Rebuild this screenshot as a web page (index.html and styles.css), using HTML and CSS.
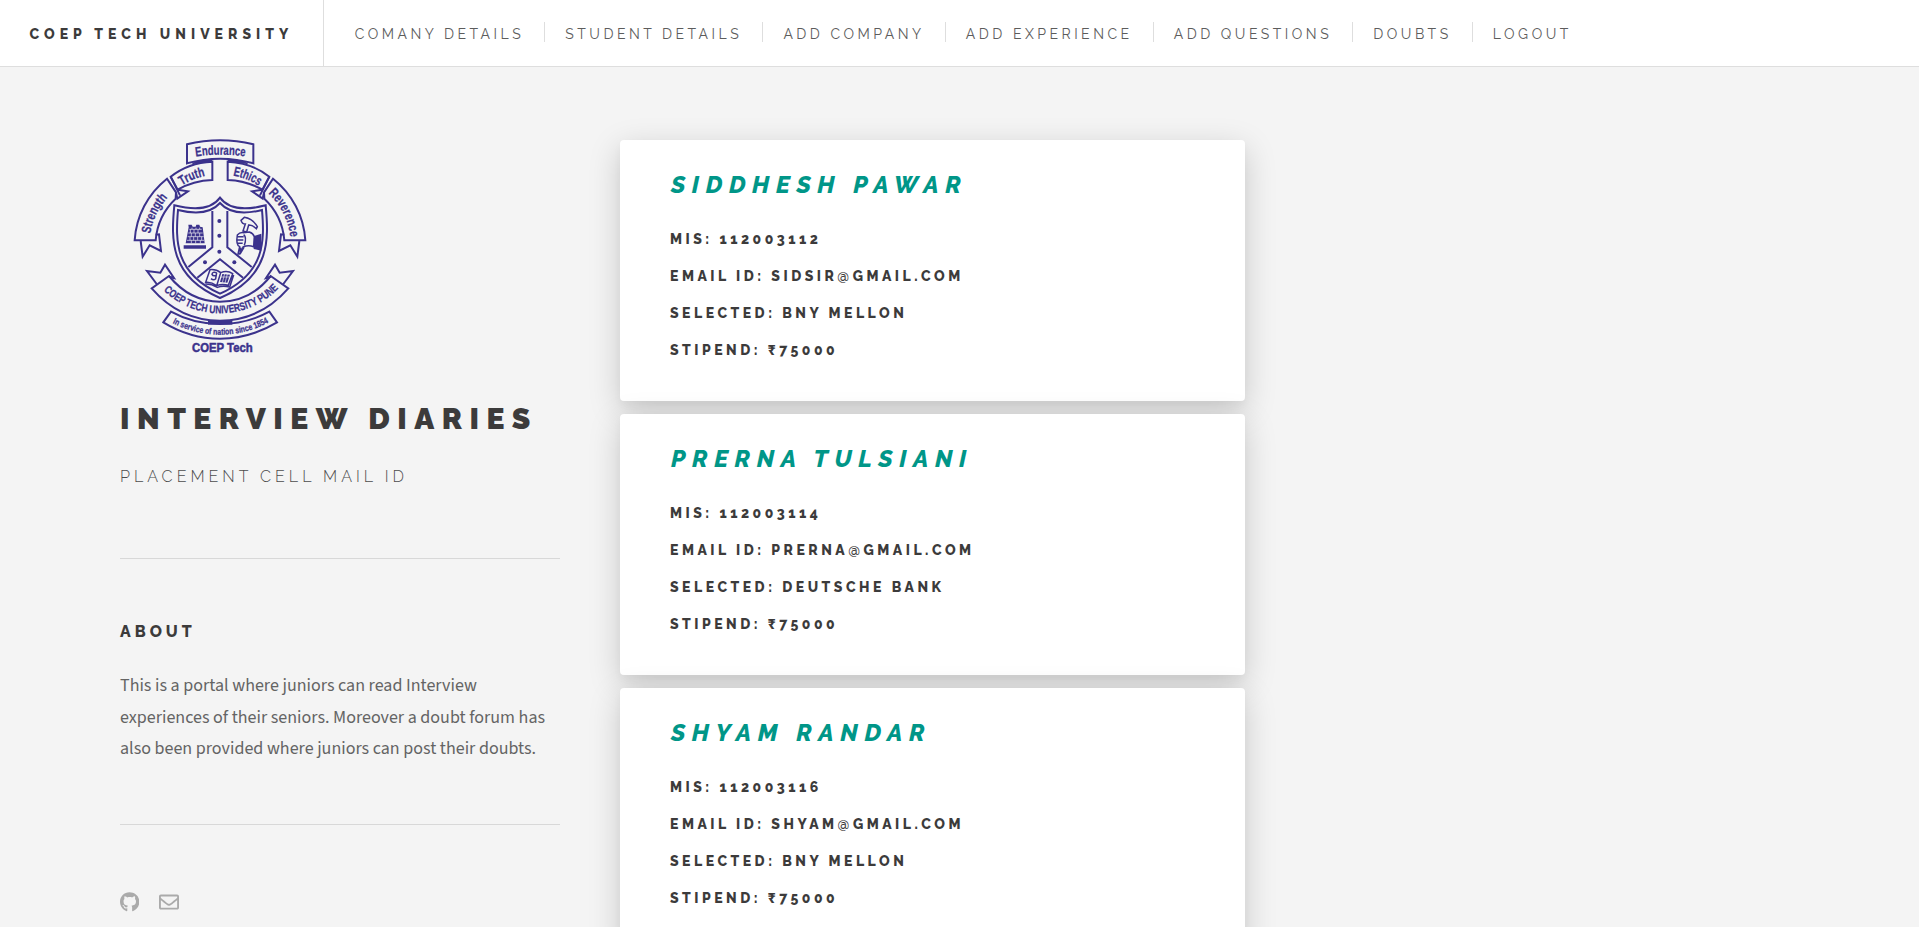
FILE: index.html
```html
<!DOCTYPE html>
<html lang="en">
<head>
<meta charset="utf-8">
<title>Interview Diaries</title>
<link rel="stylesheet" href="styles.css">
</head>
<body>
<header class="header">
<h1 class="brand">COEP Tech University</h1>
<nav class="nav">
<a class="nav-link">Comany Details</a>
<a class="nav-link">Student Details</a>
<a class="nav-link">Add Company</a>
<a class="nav-link">Add Experience</a>
<a class="nav-link">Add Questions</a>
<a class="nav-link">Doubts</a>
<a class="nav-link">Logout</a>
</nav>
</header>
<div class="page">
<aside class="sidebar">
<svg class="logo" viewBox="0 0 600 690" role="img" aria-label="COEP Tech crest">
<defs>
<path id="arcTop" d="M88 345A212 212 0 0 1 512 345"/>
<path id="arcMotto" d="M57 307A243 243 0 0 0 543 307"/>
<path id="arcService" d="M80 522A309 309 0 0 0 520 522"/>
<path id="arcEndurance" d="M200 84Q300 64 400 84"/>
</defs>
<g class="line">
<path d="M44 331A256 256 0 0 1 141 146L168 187L167 206A193 193 0 0 0 107 331Z"/>
<path d="M556 331A256 256 0 0 0 459 146L432 187L433 206A193 193 0 0 1 493 331Z"/>
<path d="M62 333L68 380L89 346L123 363L117 313L107 314"/>
<path d="M538 333L532 380L511 346L477 363L483 313L493 314"/>
<path d="M152 140Q205 98 277 95V150Q220 152 173 179Z"/>
<path d="M448 140Q395 98 323 95V150Q380 152 427 179Z"/>
<path d="M152 140L180 196M173 179L204 184L172 206L168 187"/>
<path d="M448 140L420 196M427 179L396 184L428 206L432 187"/>
<path d="M201 43Q300 18 400 43V100Q300 72 201 100Z"/>
<path d="M300 203Q265 252 163 226C153 330 150 440 300 504C450 440 447 330 437 226Q335 252 300 203Z"/>
<path d="M300 219Q262 262 174 240C166 335 165 430 300 491C435 430 434 335 426 240Q338 262 300 219Z"/>
<path d="M277 243V352L205 411M322 243V352L395 411M232 443L300 388L369 443"/>
<path d="M147 438L95 475Q180 572 300 572Q420 572 505 475L452 438Q390 515 300 515Q210 515 147 438Z"/>
<path d="M110 462L81 423L121 428L135 404L162 444L147 440"/>
<path d="M490 462L519 423L479 428L465 404L438 444L453 440"/>
<path d="M153 545L130 577Q210 626 300 626Q390 626 471 577L448 545Q380 582 300 582Q220 582 153 545Z"/>
</g>
<g class="solid">
<path d="M217 98Q250 86 277 86V97Q240 98 217 103ZM383 98Q350 86 323 86V97Q360 98 383 103Z"/>
<path d="M264 570H337V584H264Z"/>
<circle cx="298" cy="273" r="6"/><circle cx="298" cy="317" r="6"/><circle cx="298" cy="365" r="6"/><circle cx="255" cy="397" r="6"/><circle cx="343" cy="397" r="6"/>
<path d="M191 346H258V356H191ZM197 340L206 292L205 284H215L218 290H227L229 284H238L240 290L248 292L254 340Z"/>
<path d="M402 318L424 311V362L401 357Z"/>
</g>
<path class="brick" d="M208 298H245M205 309H248M203 320H251M201 331H252M216 293V298M228 293V298M239 293V298M211 298V309M222 298V309M234 298V309M214 309V320M226 309V320M239 309V320M210 320V331M221 320V331M233 320V331M245 320V331M214 331V340M227 331V340M241 331V340"/>
<g class="thin">
<path d="M363 271L373 262Q398 266 412 290L409 296Q396 284 386 285L380 306L369 303L376 282Q366 282 363 271Z"/>
<path d="M352 315Q360 306 370 308L388 306Q400 310 403 320L401 350Q386 345 370 350L358 372L354 372L359 350Q347 345 352 315ZM352 320H371M351 330H370M353 340H368M371 314Q381 322 373 346M362 352L360 372L372 352"/>
<path d="M270 419Q288 417 302 428Q322 420 338 431L325 466Q307 460 290 467Q274 455 257 457ZM302 428L290 467M341 435L329 471Q308 466 292 472Q273 461 256 462"/>
<path d="M290 428Q277 424 276 433Q279 440 289 436M290 428L287 446Q281 453 273 446"/>
</g>
<path class="solid" d="M307 432L330 434L322 458L300 456Z"/>
<path class="brick" d="M314 431L307 458M322 432L315 459M303 441H328"/>
<g class="words">
<text font-size="40"><textPath href="#arcEndurance" startOffset="28" textLength="148" lengthAdjust="spacingAndGlyphs">Endurance</textPath></text>
<text font-size="40"><textPath href="#arcTop" startOffset="34" textLength="122" lengthAdjust="spacingAndGlyphs">Strength</textPath></text>
<text font-size="40"><textPath href="#arcTop" startOffset="212" textLength="76" lengthAdjust="spacingAndGlyphs">Truth</textPath></text>
<text font-size="40"><textPath href="#arcTop" startOffset="372" textLength="84" lengthAdjust="spacingAndGlyphs">Ethics</textPath></text>
<text font-size="40"><textPath href="#arcTop" startOffset="492" textLength="150" lengthAdjust="spacingAndGlyphs">Reverence</textPath></text>
<text font-size="33"><textPath href="#arcMotto" startOffset="194" textLength="384" lengthAdjust="spacingAndGlyphs">COEP TECH UNIVERSITY PUNE</textPath></text>
<text font-size="26"><textPath href="#arcService" startOffset="97" textLength="300" lengthAdjust="spacingAndGlyphs">In service of nation since 1854</textPath></text>
<text class="name" x="216" y="667" font-size="37" textLength="182" lengthAdjust="spacingAndGlyphs">COEP Tech</text>
</g>
</svg>
<h2 class="title">Interview Diaries</h2>
<p class="mail">Placement Cell Mail Id</p>
<hr class="rule">
<h3 class="about">About</h3>
<p class="blurb">This is a portal where juniors can read Interview experiences of their seniors. Moreover a doubt forum has also been provided where juniors can post their doubts.</p>
<hr class="rule rule-last">
<div class="icons">
<svg class="icon" viewBox="0 0 496 512"><path d="M165.900 397.400c0 2-2.300 3.600-5.200 3.600-3.300.3-5.600-1.300-5.600-3.600 0-2 2.300-3.600 5.200-3.600 3-.3 5.600 1.300 5.600 3.600zm-31.100-4.500c-.7 2 1.300 4.300 4.300 4.900 2.600 1 5.600 0 6.200-2s-1.300-4.300-4.300-5.200c-2.600-.7-5.500.3-6.200 2.300zm44.200-1.700c-2.900.7-4.900 2.600-4.600 4.900.3 2 2.900 3.300 5.900 2.600 2.900-.7 4.900-2.600 4.600-4.600-.3-1.900-3-3.200-5.900-2.900zM244.800 8C106.100 8 0 113.300 0 252c0 110.900 69.800 205.800 169.500 239.200 12.800 2.300 17.300-5.600 17.300-12.100 0-6.200-.3-40.400-.3-61.400 0 0-70 15-84.700-29.800 0 0-11.400-29.100-27.800-36.600 0 0-22.900-15.700 1.600-15.400 0 0 24.900 2 38.600 25.800 21.900 38.600 58.600 27.500 72.900 20.900 2.300-16 8.800-27.100 16-33.700-55.900-6.200-112.300-14.300-112.300-110.500 0-27.500 7.600-41.300 23.600-58.900-2.600-6.500-11.100-33.300 2.600-67.900 20.900-6.500 69 27 69 27 20-5.600 41.500-8.500 62.800-8.500s42.800 2.900 62.800 8.500c0 0 48.100-33.600 69-27 13.700 34.700 5.200 61.400 2.600 67.900 16 17.700 25.800 31.500 25.800 58.900 0 96.500-58.900 104.200-114.800 110.500 9.200 7.900 17 22.900 17 46.400 0 33.700-.3 75.400-.3 83.600 0 6.500 4.600 14.400 17.300 12.100C428.200 457.800 496 362.900 496 252 496 113.300 383.500 8 244.800 8z"/></svg>
<svg class="icon" viewBox="0 0 512 512"><path d="M464 64H48C21.490 64 0 85.490 0 112v288c0 26.510 21.490 48 48 48h416c26.510 0 48-21.490 48-48V112c0-26.510-21.490-48-48-48zm0 48v40.805c-22.422 18.259-58.168 46.651-134.587 106.490-16.841 13.247-50.201 45.072-73.413 44.701-23.208.375-56.579-31.459-73.413-44.701C106.180 199.465 70.425 171.067 48 152.805V112h416zM48 400V214.398c22.914 18.251 55.409 43.862 104.938 82.646 21.857 17.205 60.134 55.186 103.062 54.955 42.717.231 80.509-37.199 103.053-54.947 49.528-38.783 82.032-64.401 104.947-82.653V400H48z"/></svg>
</div>
</aside>
<main class="cards">
<article class="card">
<h2 class="student">Siddhesh Pawar</h2>
<p class="row">MIS: 112003112</p>
<p class="row">Email ID: sidsir<span class="at">@</span>gmail.com</p>
<p class="row">Selected: BNY Mellon</p>
<p class="row">Stipend: ₹75000</p>
</article>
<article class="card">
<h2 class="student">Prerna Tulsiani</h2>
<p class="row">MIS: 112003114</p>
<p class="row">Email ID: prerna<span class="at">@</span>gmail.com</p>
<p class="row">Selected: Deutsche Bank</p>
<p class="row">Stipend: ₹75000</p>
</article>
<article class="card">
<h2 class="student">Shyam Randar</h2>
<p class="row">MIS: 112003116</p>
<p class="row">Email ID: shyam<span class="at">@</span>gmail.com</p>
<p class="row">Selected: BNY Mellon</p>
<p class="row">Stipend: ₹75000</p>
</article>
</main>
</div>
</body>
</html>
```
FILE: styles.css
```css
* { box-sizing: border-box; }
body {
  margin: 0;
  height: 927px;
  overflow: hidden;
  background: #f4f4f4;
  color: #3c3b3b;
  font-family: Raleway, "Open Sans", sans-serif;
}
h1, h2, h3, p { margin: 0; text-transform: uppercase; }

.header {
  display: flex;
  height: 67px;
  background: #fff;
  border-bottom: 1px solid #dedede;
}
.brand {
  width: 324px;
  padding-left: 29.500px;
  border-right: 1px solid #dedede;
  font-size: 14px;
  font-weight: 800;
  letter-spacing: 5.030px;
  line-height: 68px;
  white-space: nowrap;
}
.nav {
  display: flex;
  align-items: center;
  padding: 0 0 2px 10.500px;
}
.nav-link {
  height: 20px;
  padding: 0 20px 0 20.200px;
  border-left: 1px solid #dedede;
  color: #5c5c5c;
  font-size: 14px;
  letter-spacing: .25em;
  line-height: 25px;
  text-transform: uppercase;
  white-space: nowrap;
}
.nav-link:first-child { border-left: 0; }

.page {
  display: flex;
  align-items: flex-start;
  gap: 60px;
  padding: 63px 0 0 120px;
}
.sidebar { width: 440px; }
.logo { display: block; width: 200px; height: 230px; }
.line { fill: none; stroke: #3b328c; stroke-width: 6; }
.thin { fill: none; stroke: #3b328c; stroke-width: 4.500; }
.solid { fill: #3b328c; }
.brick { fill: none; stroke: #f4f4f4; stroke-width: 2; }
.words {
  fill: #3b328c;
  stroke: #3b328c;
  stroke-width: .8;
  font-family: "Liberation Sans Narrow", "Liberation Sans", sans-serif;
  font-weight: 700;
}
.name { stroke-width: 1.500; }

.title {
  margin-top: 39px;
  font-size: 30px;
  font-weight: 900;
  letter-spacing: .25em;
  line-height: 40px;
  white-space: nowrap;
}
.mail {
  margin-top: 28px;
  color: #4c4c4c;
  font-size: 16px;
  font-weight: 300;
  letter-spacing: .25em;
  line-height: 20px;
}
.rule {
  height: 1px;
  margin: 71px 0 63px;
  border: 0;
  background: #d8d8d8;
}
.about {
  font-size: 16px;
  font-weight: 800;
  letter-spacing: .25em;
  line-height: 20px;
}
.blurb {
  margin-top: 28px;
  color: #646464;
  font-family: "Source Sans 3", "Noto Sans CJK SC", sans-serif;
  font-size: 18px;
  line-height: 31.500px;
  text-transform: none;
}
.rule-last { margin: 59.500px 0 67px; }
.icons { display: flex; gap: 20px; }
.icon { height: 20px; fill: #aaa; }

.cards {
  display: flex;
  flex-direction: column;
  gap: 13px;
  width: 625px;
  padding-top: 10px;
}
.card {
  height: 261px;
  padding: 30px 50px 0;
  background: #fff;
  border-radius: 4px;
  box-shadow: 0 4px 8px rgba(0, 0, 0, .03), 0 9px 32px rgba(0, 0, 0, .18);
}
.student {
  margin-bottom: 22px;
  padding-left: 1px;
  color: #009688;
  font-size: 24px;
  font-style: italic;
  font-weight: 800;
  letter-spacing: 6.600px;
  line-height: 29px;
}
.row {
  font-size: 14px;
  font-weight: 800;
  letter-spacing: .25em;
  line-height: 37px;
}
.at { font-weight: 600; }
```
